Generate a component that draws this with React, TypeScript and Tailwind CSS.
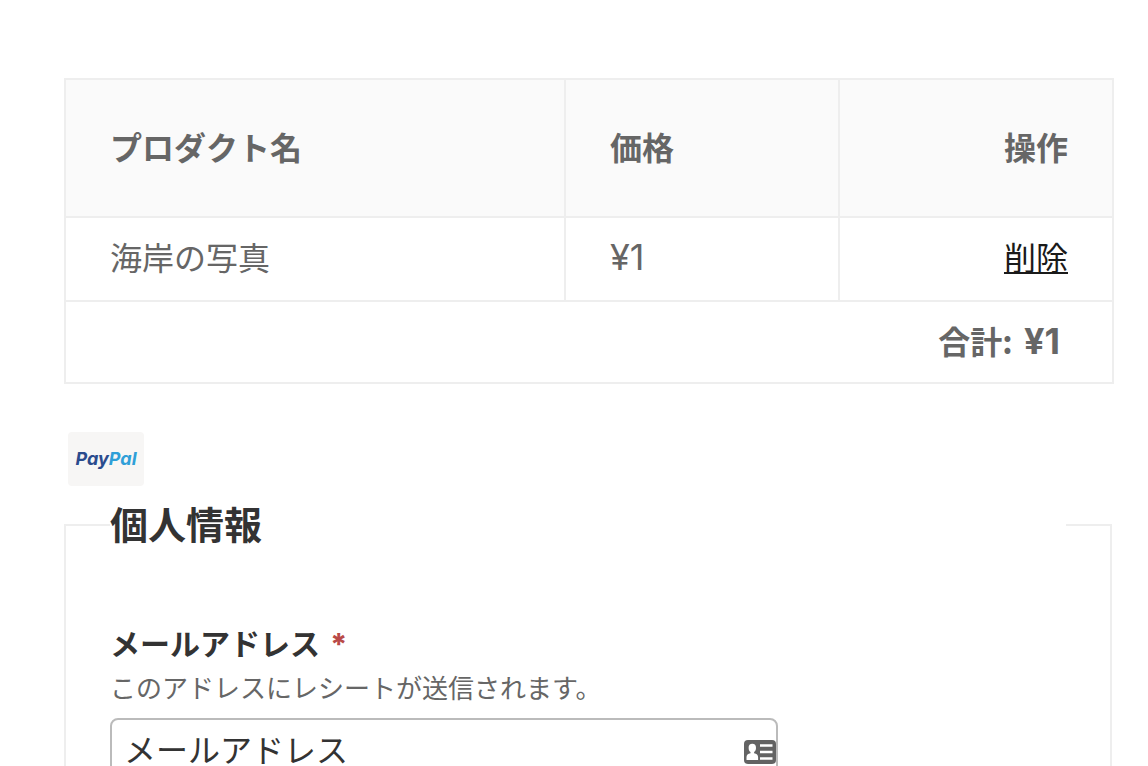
import React, { useState } from "react";

interface CartItem {
  id: number;
  name: string;
  price: number;
}

const initialItems: CartItem[] = [{ id: 1, name: "海岸の写真", price: 1 }];

const PayPalBadge: React.FC = () => (
  <div className="flex h-[54px] w-[76px] items-center justify-center rounded bg-[#f7f6f5] font-['Inter',sans-serif] text-[18px] font-bold italic">
    <span className="text-[#2a4b8d]">Pay</span>
    <span className="text-[#2f9fd8]">Pal</span>
  </div>
);

const ContactCardIcon: React.FC = () => (
  <svg viewBox="0 0 32 24" className="h-6 w-8" aria-hidden="true">
    <rect width="32" height="24" rx="4" fill="#636363" />
    <ellipse cx="8.300" cy="8" rx="3.700" ry="4.200" fill="#fff" />
    <path d="M6.500 10h3.600v3.200c2.600.5 4 1.700 4 4V20H2.500v-2.800c0-2.300 1.400-3.500 4-4z" fill="#fff" />
    <path d="M16 5.500h12.500M16 12h12.500M16 18.500h12.500" stroke="#fff" strokeWidth="2.500" />
  </svg>
);

const Amount: React.FC<{ value: number }> = ({ value }) => (
  <span className="font-['Inter',sans-serif] text-4xl leading-none">¥{value}</span>
);

const App: React.FC = () => {
  const [items, setItems] = useState(initialItems);
  const [email, setEmail] = useState("");

  const total = items.reduce((sum, item) => sum + item.price, 0);

  const removeItem = (e: React.MouseEvent, id: number) => {
    e.preventDefault();
    setItems(items.filter((item) => item.id !== id));
  };

  return (
    <div className="h-screen overflow-y-auto bg-white pt-[78px] pr-[34px] pl-16 font-['Noto_Sans_CJK_JP',sans-serif] text-[32px] leading-[48px] text-[#666] [scrollbar-width:none]">
      {/* Cart */}
      <table className="w-full table-fixed border-collapse border-2 border-[#eee]">
        <colgroup>
          <col />
          <col className="w-[274px]" />
          <col className="w-[274px]" />
        </colgroup>
        <thead className="bg-[#fafafa]">
          <tr className="h-[138px]">
            <th className="border-2 border-[#eee] px-11 pb-1 text-left font-bold">プロダクト名</th>
            <th className="border-2 border-[#eee] px-11 pb-1 text-left font-bold">価格</th>
            <th className="border-2 border-[#eee] px-11 pb-1 text-right font-bold">操作</th>
          </tr>
        </thead>
        <tbody>
          {items.map((item) => (
            <tr key={item.id} className="h-[84px]">
              <td className="border-2 border-[#eee] px-11 pb-1.5">{item.name}</td>
              <td className="border-2 border-[#eee] px-11 pb-1.5">
                <Amount value={item.price} />
              </td>
              <td className="border-2 border-[#eee] px-11 pb-1.5 text-right">
                <a
                  href="#remove"
                  className="text-[#1a1a1a] underline decoration-2 underline-offset-2"
                  onClick={(e) => removeItem(e, item.id)}
                >
                  削除
                </a>
              </td>
            </tr>
          ))}
        </tbody>
        <tfoot>
          <tr className="h-[82px]">
            <th colSpan={3} className="border-2 border-[#eee] pr-[52px] pb-1 pl-11 text-right font-bold">
              <span className="mr-1">合計:</span> <Amount value={total} />
            </th>
          </tr>
        </tfoot>
      </table>

      {/* Payment methods */}
      <div className="mt-12 pl-1">
        <PayPalBadge />
      </div>

      {/* Personal info */}
      <form>
        <fieldset className="mt-3 mr-0.5 border-2 border-[#eee] px-11 pb-11">
          <legend className="w-full pb-1 text-[38px] leading-[50px] font-bold text-[#333]">個人情報</legend>
          <div className="pt-[66px]">
            <label htmlFor="email" className="flex gap-2.5 text-[30px] leading-[48px] font-bold text-[#333]">
              メールアドレス
              <span className="font-['Inter',sans-serif] leading-[52px] font-extrabold h-12 text-[#b94a48]">*</span>
            </label>
            <p id="email-description" className="text-[26px] leading-[42px]">
              このアドレスにレシートが送信されます。
            </p>
            <div className="relative mt-2.5 w-[668px] max-w-full">
              <input
                id="email"
                type="email"
                required
                value={email}
                onChange={(e) => setEmail(e.target.value)}
                placeholder="メールアドレス"
                aria-describedby="email-description"
                className="block h-[68px] w-full rounded-lg border-2 border-[#bbb] pr-10 pb-2 pl-3 text-[#333] placeholder:text-[#333] placeholder:opacity-100"
              />
              <div className="absolute inset-y-0 right-0.5 flex items-center">
                <ContactCardIcon />
              </div>
            </div>
          </div>
        </fieldset>
      </form>
    </div>
  );
};

export default App;
